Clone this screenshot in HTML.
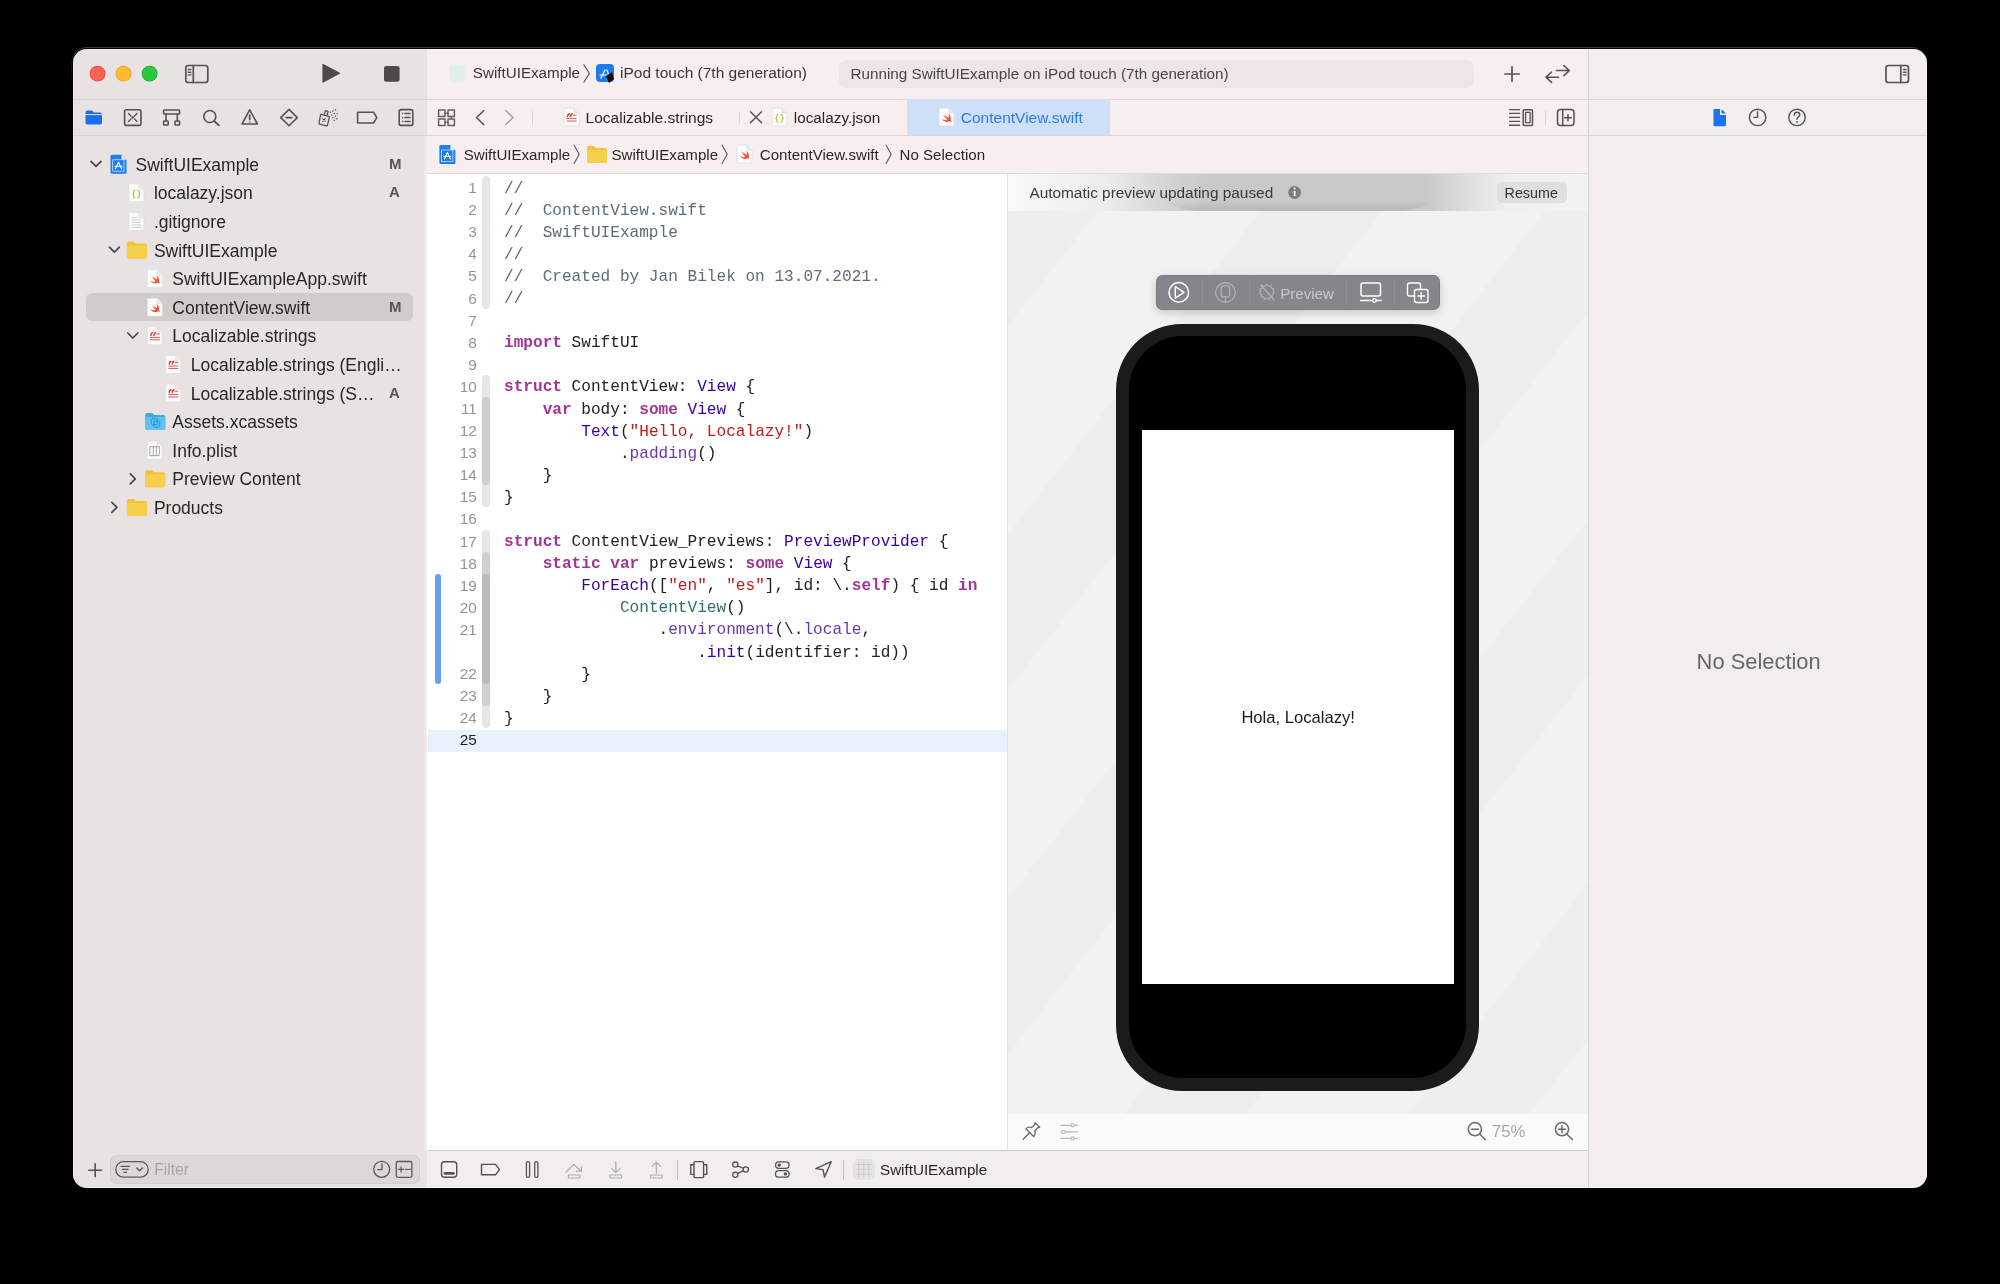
<!DOCTYPE html>
<html><head><meta charset="utf-8">
<style>
*{margin:0;padding:0;box-sizing:border-box}
html,body{width:2000px;height:1284px;background:#000;overflow:hidden;font-family:"Liberation Sans",sans-serif;color:#262222}
.a{position:absolute}
.t{position:absolute;white-space:pre}
#txt{position:absolute;left:0;top:0;width:2000px;height:1284px;will-change:transform}
svg{position:absolute;left:0;top:0}
</style></head>
<body>
<div class="a" style="left:70.6px;top:46.9px;width:1857.8px;height:60px;background:linear-gradient(180deg,#3c3c3c 0px,#1a1a1a 12px,#000 40px);border-radius:16.5px 16.5px 0 0;"></div>
<div class="a" style="left:71.5px;top:47.9px;width:1856px;height:60px;background:#000;border-radius:15.5px 15.5px 0 0;"></div>
<div class="a" style="left:72.6px;top:49px;width:354.4px;height:1138.8px;background:#e8e2e2;border-radius:14px 0 0 14px;box-shadow:inset 1px 1px 0 rgba(255,255,255,0.35),inset 0 -1px 0 rgba(255,255,255,0.35);"></div>
<div class="a" style="left:427px;top:49px;width:1161px;height:1138.8px;background:#f8eeef;box-shadow:inset 0 1px 0 rgba(255,255,255,0.45);"></div>
<div class="a" style="left:1588px;top:49px;width:338.7px;height:1138.8px;background:#f3eded;border-radius:0 14px 14px 0;box-shadow:inset -1px 1px 0 rgba(255,255,255,0.35),inset 0 -1px 0 rgba(255,255,255,0.35);"></div>
<div class="a" style="left:72.6px;top:99px;width:1854.1px;height:1px;background:#d9d3d3;"></div>
<div class="a" style="left:72.6px;top:135px;width:354.4px;height:1px;background:#d9d3d3;"></div>
<div class="a" style="left:427px;top:135px;width:1161px;height:1px;background:#dcd6d6;"></div>
<div class="a" style="left:1588px;top:135px;width:338.7px;height:1px;background:#d9d3d3;"></div>
<div class="a" style="left:427px;top:173px;width:1161px;height:1px;background:#e0dada;"></div>
<div class="a" style="left:1588px;top:49px;width:1px;height:1138.8px;background:#d6d0d0;"></div>
<div class="a" style="left:427px;top:174px;width:580px;height:976px;background:#ffffff;"></div>
<div class="a" style="left:423px;top:136px;width:4px;height:1015px;background:linear-gradient(90deg,rgba(255,255,255,0),rgba(255,255,255,0.45));"></div>
<div class="a" style="left:1007px;top:174px;width:1px;height:976px;background:#e2e2e2;"></div>
<div class="a" style="left:1008px;top:174px;width:580px;height:976px;background:#efefef;"></div>
<div class="a" style="left:427px;top:1151px;width:1161px;height:36.8px;background:#f3eeee;box-shadow:inset 0 -1px 0 rgba(255,255,255,0.35);"></div>
<div class="a" style="left:428px;top:1150px;width:1160px;height:1px;background:#d2cccc;"></div>
<div class="a" style="left:839px;top:60px;width:635px;height:28px;background:#eee5e6;border-radius:7px;"></div>
<div class="a" style="left:86px;top:293px;width:327px;height:28px;background:#d1cbcb;border-radius:6px;"></div>
<div class="a" style="left:532px;top:111px;width:1px;height:14px;background:#dcd6d6;"></div>
<div class="a" style="left:739px;top:112px;width:1px;height:12px;background:#dcd6d6;"></div>
<div class="a" style="left:907px;top:99px;width:203px;height:36px;background:#cde0f8;"></div>
<div class="a" style="left:1545px;top:110px;width:1px;height:15px;background:#dcd6d6;"></div>
<div class="a" style="left:428px;top:730px;width:579px;height:22px;background:#e8f1fd;"></div>
<div class="a" style="left:434.8px;top:574.37px;width:6px;height:109.45px;background:#65a2f7;border-radius:3px;"></div>
<div class="a" style="left:482px;top:176.25px;width:8px;height:132.45px;background:#e6e6e6;border-radius:4px 4px 4px 4px;"></div>
<div class="a" style="left:482px;top:375.06px;width:8px;height:132.45px;background:#e6e6e6;border-radius:4px 4px 4px 4px;"></div>
<div class="a" style="left:482px;top:397.15px;width:8px;height:88.27px;background:#cdcdcd;border-radius:4px 4px 4px 4px;"></div>
<div class="a" style="left:482px;top:529.69px;width:8px;height:198.72px;background:#e6e6e6;border-radius:4px 4px 4px 4px;"></div>
<div class="a" style="left:482px;top:551.78px;width:8px;height:154.54px;background:#d0d0d0;border-radius:4px 4px 4px 4px;"></div>
<div class="a" style="left:482px;top:573.87px;width:8px;height:110.36px;background:#bbbbbb;border-radius:4px 4px 4px 4px;"></div>
<div class="a" style="left:1008px;top:211px;width:580px;height:903px;background:repeating-linear-gradient(128deg,#eeeeee 0px,#eeeeee 70px,#f2f2f2 72px,#f2f2f2 198px,#eeeeee 200px,#eeeeee 224px);"></div>
<div class="a" style="left:1008px;top:174px;width:580px;height:37px;background:linear-gradient(90deg,#f9f9f9 0px,#ececec 100px,#d3d3d3 160px,#c9c9c9 205px,#cacaca 420px,#e2e2e2 468px,#f0f0f0 500px,#f3f3f3 580px);"></div>
<div class="a" style="left:1168px;top:201px;width:262px;height:10px;background:linear-gradient(180deg,rgba(0,0,0,0),rgba(0,0,0,0.09));border-radius:0 0 40px 40px / 0 0 10px 10px;"></div>
<div class="a" style="left:1496.5px;top:182px;width:70px;height:20.5px;background:#dfdfdf;border-radius:5px;"></div>
<div class="a" style="left:1156.3px;top:275px;width:284px;height:34.7px;background:#86858b;border-radius:7px;box-shadow:0 3px 10px rgba(0,0,0,0.18),inset 0 0 0 0.6px #77767b;"></div>
<div class="a" style="left:1116.4px;top:323.5px;width:362.5px;height:767.5px;background:#1b1b1b;border-radius:66px;"></div>
<div class="a" style="left:1129.2px;top:336.3px;width:337px;height:742px;background:#000;border-radius:54px;"></div>
<div class="a" style="left:1142px;top:430px;width:312px;height:554px;background:#fff;"></div>
<div class="a" style="left:1008px;top:1114px;width:580px;height:36px;background:#fbfbfb;"></div>
<div class="a" style="left:109.5px;top:1155.4px;width:310.2px;height:28.2px;background:#ddd7d7;border-radius:7px;box-shadow:inset 0 0 0 0.8px #d0caca;"></div>
<div class="a" style="left:677px;top:1159.5px;width:1.2px;height:20.5px;background:#c4bebe;"></div>
<div class="a" style="left:843.2px;top:1159.5px;width:1.2px;height:20.5px;background:#c4bebe;"></div>

<svg width="2000" height="1284" viewBox="0 0 2000 1284" fill="none" stroke-linecap="round" stroke-linejoin="round">
<circle cx="97.6" cy="73.7" r="7.9" fill="#e2463f"/><circle cx="97.6" cy="73.7" r="7.3" fill="#fe5f57"/><circle cx="123.6" cy="73.7" r="7.9" fill="#e1a325"/><circle cx="123.6" cy="73.7" r="7.3" fill="#febc2e"/><circle cx="149.6" cy="73.7" r="7.9" fill="#1aab29"/><circle cx="149.6" cy="73.7" r="7.3" fill="#28c840"/><rect x="185.8" y="65.5" width="22" height="17" rx="2.5" stroke="#575151" stroke-width="1.7"/><line x1="193.3" y1="65.5" x2="193.3" y2="82.5" stroke="#575151" stroke-width="1.7"/><path d="M188.3 69.5h2.6M188.3 72.2h2.6M188.3 74.9h2.6" stroke="#575151" stroke-width="1.4"/><path d="M323 64.6 L339.6 73.3 L323 82 Z" fill="#4f4a4a" stroke="#4f4a4a" stroke-width="1.2"/><rect x="384" y="66" width="15.6" height="15.8" rx="2.2" fill="#4f4a4a"/><rect x="449" y="65" width="16" height="17" rx="3" fill="#e3eeec" stroke="#ececec" stroke-width="0.8"/><path d="M583.8 64.6 L589.4 73.4 L583.8 82.2" stroke="#5c5656" stroke-width="1.1" stroke-linejoin="miter"/><rect x="596" y="64" width="18" height="18" rx="4" fill="#1d7bf2"/><path d="M601 78 L605 70 M607 70 L610 78 M600 75 H610" stroke="#fff" stroke-width="1.2"/><path d="M606 76 L612 72 L614 79 L609 83 Z" fill="#111"/><path d="M1512 66.8V81.2M1504.9 74H1519.2" stroke="#575151" stroke-width="1.7"/><path d="M1556.4 70.5H1569.3M1563.9 65.6L1569.3 70.5L1563.9 75.6M1546 77.2H1558.5M1551.5 72L1546 77.2L1551.5 82.4" stroke="#575151" stroke-width="1.6"/><rect x="1886" y="65.5" width="22.5" height="17" rx="2.5" stroke="#575151" stroke-width="1.7"/><line x1="1900.8" y1="65.5" x2="1900.8" y2="82.5" stroke="#575151" stroke-width="1.7"/><path d="M1903.5 69.5h2.6M1903.5 72.2h2.6M1903.5 74.9h2.6" stroke="#575151" stroke-width="1.4"/><path d="M85.5 112.5 Q85.5 110.5 87.5 110.5 H92 L94 112.5 H100 Q102 112.5 102 114.5 V122.5 Q102 124.5 100 124.5 H87.5 Q85.5 124.5 85.5 122.5 Z" fill="#1b6ef3"/><path d="M85.5 114.6 H102" stroke="#e8e2e2" stroke-width="1"/><rect x="124.6" y="109.8" width="16.4" height="15.6" rx="2" stroke="#575151" stroke-width="1.6"/><path d="M128.5 113.5L131 116M137 113.5L134.5 116M128.5 121.5L131 119M137 121.5L134.5 119" stroke="#575151" stroke-width="1.3"/><circle cx="132.8" cy="117.5" r="1.3" fill="#575151"/><rect x="163.6" y="110" width="16" height="4" rx="0.8" stroke="#575151" stroke-width="1.6"/><path d="M166 114V121M177.3 114V121" stroke="#575151" stroke-width="1.6"/><rect x="163.6" y="121" width="4.6" height="4" rx="0.8" stroke="#575151" stroke-width="1.6"/><rect x="175" y="121" width="4.6" height="4" rx="0.8" stroke="#575151" stroke-width="1.6"/><circle cx="209.8" cy="116.5" r="6" stroke="#575151" stroke-width="1.6"/><path d="M214.2 121L218.8 125.4" stroke="#575151" stroke-width="1.8"/><path d="M249.7 109.8 L257.4 124 H242 Z" stroke="#575151" stroke-width="1.6"/><path d="M249.7 115V119.5" stroke="#575151" stroke-width="1.7"/><circle cx="249.7" cy="122" r="0.8" fill="#575151"/><path d="M289 109.4 L297.3 117.6 L289 125.8 L280.7 117.6 Z" stroke="#575151" stroke-width="1.6"/><path d="M286 117.6H292" stroke="#575151" stroke-width="1.6"/><path d="M321.3 114.3 L328.9 116.3 Q329.5 116.5 329.4 117.2 L327.4 125.3 Q327.2 126 326.5 125.8 L319.6 124.1 Q318.9 123.9 319.1 123.2 L320.5 114.9 Q320.7 114.2 321.3 114.3 Z M324.6 113.9 L325.3 110.6 L328 111.3 L327.4 114.6" stroke="#575151" stroke-width="1.3"/><path d="M322.6 118.8L325.4 121.4M325.2 118.6L322.8 121.6" stroke="#575151" stroke-width="1.1"/><circle cx="335.5" cy="109.7" r="0.75" fill="#575151"/><circle cx="332.9" cy="110.9" r="0.75" fill="#575151"/><circle cx="330.5" cy="112.3" r="0.75" fill="#575151"/><circle cx="334.3" cy="113.5" r="0.75" fill="#575151"/><circle cx="337.1" cy="113.7" r="0.75" fill="#575151"/><circle cx="331.7" cy="114.9" r="0.75" fill="#575151"/><circle cx="335.5" cy="116.2" r="0.75" fill="#575151"/><circle cx="332.9" cy="117.4" r="0.75" fill="#575151"/><circle cx="336.9" cy="118.8" r="0.75" fill="#575151"/><circle cx="334.3" cy="120.2" r="0.75" fill="#575151"/><path d="M357.6 112.2 H373.5 L376.8 117.6 L373.5 123 H357.6 Z" stroke="#575151" stroke-width="1.6"/><rect x="399.2" y="109.6" width="13.6" height="15.8" rx="2" stroke="#575151" stroke-width="1.6"/><path d="M402.5 113.4h.3M402.5 117.6h.3M402.5 121.4h.3" stroke="#575151" stroke-width="1.4"/><path d="M405 113.4h5M405 117.6h5M405 121.4h5" stroke="#575151" stroke-width="1.5"/><path d="M91.0 161.39999999999998 L96.0 166.39999999999998 L101.0 161.39999999999998" stroke="#4d4747" stroke-width="1.7"/><path d="M110.5 156.2 Q110.5 154.7 112.0 154.7 H121.5 L126.5 159.7 V172.7 Q126.5 173.7 125.5 173.7 H112.0 Q110.5 173.7 110.5 172.2 Z" fill="#1f7ef0"/><path d="M121.5 154.7 L126.5 159.7 H122.5 Q121.5 159.7 121.5 158.7 Z" fill="#eaf3ff"/><rect x="113.0" y="159.7" width="11" height="11.5" fill="none" stroke="#cfe4ff" stroke-width="0.8"/><path d="M115.5 168.7 L118.5 162.2 L121.5 168.7 M115.0 166.2 H122.0" stroke="#fff" stroke-width="1.1"/><path d="M128.9 184.79999999999998 Q128.9 183.79999999999998 129.9 183.79999999999998 H138.9 L143.9 188.79999999999998 V200.79999999999998 Q143.9 201.79999999999998 142.9 201.79999999999998 H129.9 Q128.9 201.79999999999998 128.9 200.79999999999998 Z" fill="#fbfbfb" stroke="#dcdcdc" stroke-width="0.7"/><path d="M138.9 183.79999999999998 V188.79999999999998 H143.9" fill="#ececec" stroke="#d6d6d6" stroke-width="0.6"/><path d="M134.9 190.39999999999998 q-1.3 0 -1.3 1.3 v1.5 q0 1 -1 1 q1 0 1 1 v1.5 q0 1.3 1.3 1.3 M137.9 190.39999999999998 q1.3 0 1.3 1.3 v1.5 q0 1 1 1 q-1 0 -1 1 v1.5 q0 1.3 -1.3 1.3" stroke="#b5c33a" stroke-width="1.1"/><path d="M128.9 213.39999999999998 Q128.9 212.39999999999998 129.9 212.39999999999998 H138.9 L143.9 217.39999999999998 V229.39999999999998 Q143.9 230.39999999999998 142.9 230.39999999999998 H129.9 Q128.9 230.39999999999998 128.9 229.39999999999998 Z" fill="#fbfbfb" stroke="#dcdcdc" stroke-width="0.7"/><path d="M138.9 212.39999999999998 V217.39999999999998 H143.9" fill="#ececec" stroke="#d6d6d6" stroke-width="0.6"/><path d="M131.9 217.39999999999998h5M131.9 219.89999999999998h9M131.9 222.39999999999998h9M131.9 224.89999999999998h9M131.9 227.39999999999998h9" stroke="#c9c9c9" stroke-width="0.9"/><path d="M109.4 247.2 L114.4 252.2 L119.4 247.2" stroke="#4d4747" stroke-width="1.7"/><path d="M126.9 243.5 Q126.9 241.5 128.9 241.5 H133.9 L135.9 243.5 H144.9 Q146.9 243.5 146.9 245.5 V256.5 Q146.9 258.5 144.9 258.5 H128.9 Q126.9 258.5 126.9 256.5 Z" fill="#f2c33a"/><path d="M126.9 247.0 Q126.9 245.5 128.4 245.5 H145.4 Q146.9 245.5 146.9 247.0 V256.7 Q146.9 258.5 145.1 258.5 H128.70000000000002 Q126.9 258.5 126.9 256.7 Z" fill="#f6cf4b"/><path d="M147.3 270.59999999999997 Q147.3 269.59999999999997 148.3 269.59999999999997 H157.3 L162.3 274.59999999999997 V286.59999999999997 Q162.3 287.59999999999997 161.3 287.59999999999997 H148.3 Q147.3 287.59999999999997 147.3 286.59999999999997 Z" fill="#fbfbfb" stroke="#dcdcdc" stroke-width="0.7"/><path d="M157.3 269.59999999999997 V274.59999999999997 H162.3" fill="#ececec" stroke="#d6d6d6" stroke-width="0.6"/><path transform="translate(148.90 273.20) scale(0.53)" d="M13.543 3.41c4.114 2.47 6.545 7.162 5.549 11.131-.024.093-.05.181-.076.272l.002.001c2.062 2.538 1.5 5.258 1.236 4.745-1.072-2.086-3.066-1.568-4.088-1.043a6.803 6.803 0 0 1-.281.158l-.02.012-.002.002c-2.115 1.123-4.957 1.205-7.812-.022a12.568 12.568 0 0 1-5.640-4.838c.649.48 1.35.902 2.097 1.252 3.019 1.414 6.051 1.311 8.197-.002C9.651 12.73 7.101 9.67 5.146 7.191a10.628 10.628 0 0 1-1.005-1.384c2.34 2.142 6.038 4.83 7.365 5.576C8.69 8.408 6.208 4.743 6.324 4.86c4.436 4.47 8.528 6.996 8.528 6.996.154.085.27.154.36.213.085-.215.16-.437.224-.668.707-2.588-.09-5.548-1.893-7.992z" fill="#f05138"/><path d="M147.3 299.2 Q147.3 298.2 148.3 298.2 H157.3 L162.3 303.2 V315.2 Q162.3 316.2 161.3 316.2 H148.3 Q147.3 316.2 147.3 315.2 Z" fill="#fbfbfb" stroke="#dcdcdc" stroke-width="0.7"/><path d="M157.3 298.2 V303.2 H162.3" fill="#ececec" stroke="#d6d6d6" stroke-width="0.6"/><path transform="translate(148.90 301.80) scale(0.53)" d="M13.543 3.41c4.114 2.47 6.545 7.162 5.549 11.131-.024.093-.05.181-.076.272l.002.001c2.062 2.538 1.5 5.258 1.236 4.745-1.072-2.086-3.066-1.568-4.088-1.043a6.803 6.803 0 0 1-.281.158l-.02.012-.002.002c-2.115 1.123-4.957 1.205-7.812-.022a12.568 12.568 0 0 1-5.640-4.838c.649.48 1.35.902 2.097 1.252 3.019 1.414 6.051 1.311 8.197-.002C9.651 12.73 7.101 9.67 5.146 7.191a10.628 10.628 0 0 1-1.005-1.384c2.34 2.142 6.038 4.83 7.365 5.576C8.69 8.408 6.208 4.743 6.324 4.86c4.436 4.47 8.528 6.996 8.528 6.996.154.085.27.154.36.213.085-.215.16-.437.224-.668.707-2.588-.09-5.548-1.893-7.992z" fill="#f05138"/><path d="M127.80000000000001 333.0 L132.8 338.0 L137.8 333.0" stroke="#4d4747" stroke-width="1.7"/><path d="M147.3 327.8 Q147.3 326.8 148.3 326.8 H157.3 L162.3 331.8 V343.8 Q162.3 344.8 161.3 344.8 H148.3 Q147.3 344.8 147.3 343.8 Z" fill="#fbfbfb" stroke="#dcdcdc" stroke-width="0.7"/><path d="M157.3 326.8 V331.8 H162.3" fill="#ececec" stroke="#d6d6d6" stroke-width="0.6"/><path d="M150.9 335.40000000000003 q0-2.2 1.6-2.8 M153.9 335.40000000000003 q0-2.2 1.6-2.8" stroke="#d63a2f" stroke-width="1.5" stroke-linecap="round"/><path d="M156.5 334.0h3M150.3 337.40000000000003h9.2M150.3 339.8h9.2" stroke="#d9574d" stroke-width="1"/><path d="M165.7 356.40000000000003 Q165.7 355.40000000000003 166.7 355.40000000000003 H175.7 L180.7 360.40000000000003 V372.40000000000003 Q180.7 373.40000000000003 179.7 373.40000000000003 H166.7 Q165.7 373.40000000000003 165.7 372.40000000000003 Z" fill="#fbfbfb" stroke="#dcdcdc" stroke-width="0.7"/><path d="M175.7 355.40000000000003 V360.40000000000003 H180.7" fill="#ececec" stroke="#d6d6d6" stroke-width="0.6"/><path d="M169.29999999999998 364.00000000000006 q0-2.2 1.6-2.8 M172.29999999999998 364.00000000000006 q0-2.2 1.6-2.8" stroke="#d63a2f" stroke-width="1.5" stroke-linecap="round"/><path d="M174.89999999999998 362.6h3M168.7 366.00000000000006h9.2M168.7 368.40000000000003h9.2" stroke="#d9574d" stroke-width="1"/><path d="M165.7 385.0 Q165.7 384.0 166.7 384.0 H175.7 L180.7 389.0 V401.0 Q180.7 402.0 179.7 402.0 H166.7 Q165.7 402.0 165.7 401.0 Z" fill="#fbfbfb" stroke="#dcdcdc" stroke-width="0.7"/><path d="M175.7 384.0 V389.0 H180.7" fill="#ececec" stroke="#d6d6d6" stroke-width="0.6"/><path d="M169.29999999999998 392.6 q0-2.2 1.6-2.8 M172.29999999999998 392.6 q0-2.2 1.6-2.8" stroke="#d63a2f" stroke-width="1.5" stroke-linecap="round"/><path d="M174.89999999999998 391.2h3M168.7 394.6h9.2M168.7 397.0h9.2" stroke="#d9574d" stroke-width="1"/><path d="M145.3 415.1 Q145.3 413.1 147.3 413.1 H152.3 L154.3 415.1 H163.3 Q165.3 415.1 165.3 417.1 V428.1 Q165.3 430.1 163.3 430.1 H147.3 Q145.3 430.1 145.3 428.1 Z" fill="#3ea8e6"/><path d="M145.3 418.6 Q145.3 417.1 146.8 417.1 H163.8 Q165.3 417.1 165.3 418.6 V428.3 Q165.3 430.1 163.5 430.1 H147.10000000000002 Q145.3 430.1 145.3 428.3 Z" fill="#5ec3f2"/><rect x="151.3" y="418.6" width="6" height="6" stroke="#2d8fd0" stroke-width="0.9" rx="1"/><rect x="153.8" y="421.1" width="6" height="6" stroke="#2d8fd0" stroke-width="0.9" rx="1"/><path d="M147.3 442.2 Q147.3 441.2 148.3 441.2 H157.3 L162.3 446.2 V458.2 Q162.3 459.2 161.3 459.2 H148.3 Q147.3 459.2 147.3 458.2 Z" fill="#fbfbfb" stroke="#dcdcdc" stroke-width="0.7"/><path d="M157.3 441.2 V446.2 H162.3" fill="#ececec" stroke="#d6d6d6" stroke-width="0.6"/><rect x="150.3" y="446.7" width="9" height="9" fill="none" stroke="#9a9a9a" stroke-width="0.9"/><path d="M153.3 446.7v9M156.3 446.7v9" stroke="#9a9a9a" stroke-width="0.9"/><path d="M130.3 473.8 L135.3 478.8 L130.3 483.8" stroke="#4d4747" stroke-width="1.7"/><path d="M145.3 472.3 Q145.3 470.3 147.3 470.3 H152.3 L154.3 472.3 H163.3 Q165.3 472.3 165.3 474.3 V485.3 Q165.3 487.3 163.3 487.3 H147.3 Q145.3 487.3 145.3 485.3 Z" fill="#f2c33a"/><path d="M145.3 475.8 Q145.3 474.3 146.8 474.3 H163.8 Q165.3 474.3 165.3 475.8 V485.5 Q165.3 487.3 163.5 487.3 H147.10000000000002 Q145.3 487.3 145.3 485.5 Z" fill="#f6cf4b"/><path d="M111.9 502.40000000000003 L116.9 507.40000000000003 L111.9 512.4000000000001" stroke="#4d4747" stroke-width="1.7"/><path d="M126.9 500.90000000000003 Q126.9 498.90000000000003 128.9 498.90000000000003 H133.9 L135.9 500.90000000000003 H144.9 Q146.9 500.90000000000003 146.9 502.90000000000003 V513.9000000000001 Q146.9 515.9000000000001 144.9 515.9000000000001 H128.9 Q126.9 515.9000000000001 126.9 513.9000000000001 Z" fill="#f2c33a"/><path d="M126.9 504.40000000000003 Q126.9 502.90000000000003 128.4 502.90000000000003 H145.4 Q146.9 502.90000000000003 146.9 504.40000000000003 V514.1 Q146.9 515.9000000000001 145.1 515.9000000000001 H128.70000000000002 Q126.9 515.9000000000001 126.9 514.1 Z" fill="#f6cf4b"/><path d="M438.6 110h6.4v6.4h-6.4zM438.6 119h6.4v6.4h-6.4zM448 110h6.4v6.4h-6.4zM448 119h6.4v6.4h-6.4z" stroke="#656060" stroke-width="1.5"/><path d="M445 113.2h3.5M451.2 116.4v2.6M448 122.2h-3" stroke="#575151" stroke-width="1"/><path d="M483.8 110.6 L476.5 117.6 L483.8 124.6" stroke="#625c5c" stroke-width="1.5"/><path d="M505.9 110.6 L513 117.6 L505.9 124.6" stroke="#a29c9c" stroke-width="1.4"/><path d="M564 109 Q564 108 565 108 H574 L579 113 V125 Q579 126 578 126 H565 Q564 126 564 125 Z" fill="#fbfbfb" stroke="#dcdcdc" stroke-width="0.7"/><path d="M574 108 V113 H579" fill="#ececec" stroke="#d6d6d6" stroke-width="0.6"/><path d="M567.6 116.6 q0-2.2 1.6-2.8 M570.6 116.6 q0-2.2 1.6-2.8" stroke="#d63a2f" stroke-width="1.5" stroke-linecap="round"/><path d="M573.2 115.2h3M567 118.6h9.2M567 121h9.2" stroke="#d9574d" stroke-width="1"/><path d="M750.5 111.8L761.5 122.8M761.5 111.8L750.5 122.8" stroke="#5a5454" stroke-width="1.5"/><path d="M772 109 Q772 108 773 108 H782 L787 113 V125 Q787 126 786 126 H773 Q772 126 772 125 Z" fill="#fbfbfb" stroke="#dcdcdc" stroke-width="0.7"/><path d="M782 108 V113 H787" fill="#ececec" stroke="#d6d6d6" stroke-width="0.6"/><path d="M778 114.6 q-1.3 0 -1.3 1.3 v1.5 q0 1 -1 1 q1 0 1 1 v1.5 q0 1.3 1.3 1.3 M781 114.6 q1.3 0 1.3 1.3 v1.5 q0 1 1 1 q-1 0 -1 1 v1.5 q0 1.3 -1.3 1.3" stroke="#b5c33a" stroke-width="1.1"/><path d="M939 109 Q939 108 940 108 H949 L954 113 V125 Q954 126 953 126 H940 Q939 126 939 125 Z" fill="#fbfbfb" stroke="#dcdcdc" stroke-width="0.7"/><path d="M949 108 V113 H954" fill="#ececec" stroke="#d6d6d6" stroke-width="0.6"/><path transform="translate(940.60 111.60) scale(0.53)" d="M13.543 3.41c4.114 2.47 6.545 7.162 5.549 11.131-.024.093-.05.181-.076.272l.002.001c2.062 2.538 1.5 5.258 1.236 4.745-1.072-2.086-3.066-1.568-4.088-1.043a6.803 6.803 0 0 1-.281.158l-.02.012-.002.002c-2.115 1.123-4.957 1.205-7.812-.022a12.568 12.568 0 0 1-5.640-4.838c.649.48 1.35.902 2.097 1.252 3.019 1.414 6.051 1.311 8.197-.002C9.651 12.73 7.101 9.67 5.146 7.191a10.628 10.628 0 0 1-1.005-1.384c2.34 2.142 6.038 4.83 7.365 5.576C8.69 8.408 6.208 4.743 6.324 4.86c4.436 4.47 8.528 6.996 8.528 6.996.154.085.27.154.36.213.085-.215.16-.437.224-.668.707-2.588-.09-5.548-1.893-7.992z" fill="#f05138"/><path d="M1509.6 109.6h10M1509.6 113.4h10M1509.6 117.4h10M1509.6 121.4h10M1509.6 125.3h10" stroke="#575151" stroke-width="1.4"/><rect x="1523.2" y="109.8" width="9.3" height="15.6" rx="1" stroke="#575151" stroke-width="1.5"/><rect x="1525.6" y="112.4" width="4.5" height="10.2" stroke="#575151" stroke-width="1.3"/><rect x="1557.5" y="109.6" width="16.5" height="15.8" rx="3" stroke="#575151" stroke-width="1.5"/><path d="M1562.7 109.6v15.8M1568 114.5v6.4M1564.8 117.7h6.4" stroke="#575151" stroke-width="1.5"/><path d="M439.4 146.5 Q439.4 145 440.9 145 H450.4 L455.4 150 V163 Q455.4 164 454.4 164 H440.9 Q439.4 164 439.4 162.5 Z" fill="#1f7ef0"/><path d="M450.4 145 L455.4 150 H451.4 Q450.4 150 450.4 149 Z" fill="#eaf3ff"/><rect x="441.9" y="150" width="11" height="11.5" fill="none" stroke="#cfe4ff" stroke-width="0.8"/><path d="M444.4 159 L447.4 152.5 L450.4 159 M443.9 156.5 H450.9" stroke="#fff" stroke-width="1.1"/><path d="M574 145 L579.2 154.3 L574 163.6" stroke="#5c5656" stroke-width="1.1" stroke-linejoin="miter"/><path d="M587 148 Q587 146 589 146 H594 L596 148 H605 Q607 148 607 150 V161 Q607 163 605 163 H589 Q587 163 587 161 Z" fill="#f2c33a"/><path d="M587 151.5 Q587 150 588.5 150 H605.5 Q607 150 607 151.5 V161.2 Q607 163 605.2 163 H588.8 Q587 163 587 161.2 Z" fill="#f6cf4b"/><path d="M722 145 L727.2 154.3 L722 163.6" stroke="#5c5656" stroke-width="1.1" stroke-linejoin="miter"/><path d="M737 146 Q737 145 738 145 H747 L752 150 V162 Q752 163 751 163 H738 Q737 163 737 162 Z" fill="#fbfbfb" stroke="#dcdcdc" stroke-width="0.7"/><path d="M747 145 V150 H752" fill="#ececec" stroke="#d6d6d6" stroke-width="0.6"/><path transform="translate(738.60 148.60) scale(0.53)" d="M13.543 3.41c4.114 2.47 6.545 7.162 5.549 11.131-.024.093-.05.181-.076.272l.002.001c2.062 2.538 1.5 5.258 1.236 4.745-1.072-2.086-3.066-1.568-4.088-1.043a6.803 6.803 0 0 1-.281.158l-.02.012-.002.002c-2.115 1.123-4.957 1.205-7.812-.022a12.568 12.568 0 0 1-5.640-4.838c.649.48 1.35.902 2.097 1.252 3.019 1.414 6.051 1.311 8.197-.002C9.651 12.73 7.101 9.67 5.146 7.191a10.628 10.628 0 0 1-1.005-1.384c2.34 2.142 6.038 4.83 7.365 5.576C8.69 8.408 6.208 4.743 6.324 4.86c4.436 4.47 8.528 6.996 8.528 6.996.154.085.27.154.36.213.085-.215.16-.437.224-.668.707-2.588-.09-5.548-1.893-7.992z" fill="#f05138"/><path d="M886 145 L891.2 154.3 L886 163.6" stroke="#5c5656" stroke-width="1.1" stroke-linejoin="miter"/><path d="M1713.5 110 Q1713.5 109 1714.5 109 H1720 V115 H1726 V125 Q1726 126.2 1724.8 126.2 H1714.7 Q1713.5 126.2 1713.5 125 Z" fill="#1a73f0"/><path d="M1721.5 109 L1726 113.6 H1721.5 Z" fill="#1a73f0"/><circle cx="1757.6" cy="117.4" r="8.2" stroke="#575151" stroke-width="1.4"/><path d="M1757.6 111.8V117.4H1753.8" stroke="#575151" stroke-width="1.4"/><circle cx="1797" cy="117.4" r="8.2" stroke="#575151" stroke-width="1.4"/><path d="M1794.3 115.2 Q1794.3 112.2 1797 112.2 Q1799.8 112.2 1799.8 114.8 Q1799.8 116.4 1797.8 117.3 Q1797 117.8 1797 119.3" stroke="#575151" stroke-width="1.4"/><circle cx="1797" cy="122" r="0.9" fill="#575151"/><circle cx="1294.6" cy="192.5" r="6.4" fill="#7c7c7c"/><path d="M1294.6 191V196" stroke="#fff" stroke-width="1.8" stroke-linecap="butt"/><circle cx="1294.6" cy="188.6" r="1" fill="#fff"/><circle cx="1178.8" cy="292.4" r="9.8" stroke="#fff" stroke-width="1.5"/><path d="M1175.3 286.6 L1184 292.4 L1175.3 298.2 Z" stroke="#fff" stroke-width="1.4"/><path d="M1202.5 280v25M1249.7 280v25M1346.5 280v25M1394.5 280v25" stroke="#8f8e94" stroke-width="1"/><circle cx="1225.4" cy="292.4" r="9.8" stroke="#b3b2b7" stroke-width="1.2"/><rect x="1221.2" y="285.8" width="8.4" height="11" rx="2" stroke="#b3b2b7" stroke-width="1.2"/><path d="M1225.4 296.8v5.5" stroke="#b3b2b7" stroke-width="1.2"/><path d="M1267.2 284.5 l1.6 1.8 2.3-.5.5 2.3 2.2.9-.9 2.2 1.2 2-1.9 1.3.1 2.4-2.4.2-1 2.2-2.1-1.1-2.1 1.1-1-2.2-2.4-.2.1-2.4-1.9-1.3 1.2-2-.9-2.2 2.2-.9.5-2.3 2.3.5z" stroke="#b3b2b7" stroke-width="1.1"/><path d="M1261 285 L1274 300" stroke="#b3b2b7" stroke-width="1.2"/><rect x="1361" y="283" width="19.5" height="13" rx="2" stroke="#fff" stroke-width="1.5"/><path d="M1360.5 300.5H1381.5" stroke="#fff" stroke-width="1.3"/><circle cx="1374.5" cy="300.5" r="1.8" fill="#86858b" stroke="#fff" stroke-width="1.3"/><rect x="1407.5" y="283" width="13" height="13" rx="2" stroke="#fff" stroke-width="1.4"/><rect x="1414.5" y="289.5" width="13.5" height="13" rx="2" fill="#86858b" stroke="#fff" stroke-width="1.4"/><path d="M1421.2 292.6v6.8M1417.8 296h6.8" stroke="#fff" stroke-width="1.4"/><g transform="translate(1030.6 1131.8) rotate(45)"><path d="M-3.2 -9.6 H3.2 L2.2 -8 V-3.8 Q5.4 -2.2 5.4 1.2 H-5.4 Q-5.4 -2.2 -2.2 -3.8 V-8 Z" stroke="#6a6a6a" stroke-width="1.3"/><path d="M0 1.4 V10.5" stroke="#6a6a6a" stroke-width="1.4"/></g><path d="M1061 1125.4H1077.4M1061 1131.9H1077.4M1061 1138.4H1077.4" stroke="#b5b5b5" stroke-width="1.1"/><circle cx="1072.6" cy="1125.4" r="1.6" fill="#fbfbfb" stroke="#b5b5b5" stroke-width="1.1"/><circle cx="1063.6" cy="1131.9" r="1.6" fill="#fbfbfb" stroke="#b5b5b5" stroke-width="1.1"/><circle cx="1072.6" cy="1138.4" r="1.6" fill="#fbfbfb" stroke="#b5b5b5" stroke-width="1.1"/><circle cx="1474.9" cy="1129.2" r="6.6" stroke="#6a6a6a" stroke-width="1.5"/><path d="M1479.6 1134L1485.3 1139.5M1471.4 1129.2H1478.4" stroke="#6a6a6a" stroke-width="1.5"/><circle cx="1562" cy="1129.2" r="6.6" stroke="#6a6a6a" stroke-width="1.5"/><path d="M1566.7 1134L1572.4 1139.5M1558.5 1129.2H1565.5M1562 1125.7V1132.7" stroke="#6a6a6a" stroke-width="1.5"/><path d="M95.2 1163.8V1176.6M88.8 1170.2H101.6" stroke="#575151" stroke-width="1.6"/><rect x="115.8" y="1161.6" width="32.4" height="15.6" rx="7.8" stroke="#5e5858" stroke-width="1.3"/><path d="M121 1166.4h8.4M122.4 1169.4h5.6M124 1172.4h2.4" stroke="#5e5858" stroke-width="1.3"/><path d="M136.8 1168l2.8 2.8 2.8-2.8" stroke="#5e5858" stroke-width="1.4"/><circle cx="381.7" cy="1169.3" r="8" stroke="#5e5858" stroke-width="1.3"/><path d="M382 1163.8V1169.6H377.6" stroke="#5e5858" stroke-width="1.3"/><rect x="396.3" y="1161.5" width="15.6" height="15.8" rx="1.5" stroke="#5e5858" stroke-width="1.3"/><path d="M398.6 1169.4h5M401.1 1166.9v5M405.6 1169.4h1.8M408.6 1169.4h1.8" stroke="#5e5858" stroke-width="1.2"/><rect x="441.5" y="1161.8" width="15.2" height="15.4" rx="3" stroke="#575151" stroke-width="1.4"/><rect x="443.6" y="1172" width="11" height="2.8" rx="1.2" fill="#575151"/><path d="M481.5 1164.4 H495.6 L499.4 1169.6 L495.6 1174.8 H481.5 Z" stroke="#575151" stroke-width="1.4"/><rect x="526.4" y="1161.6" width="3.2" height="15.8" rx="1.6" stroke="#575151" stroke-width="1.3"/><rect x="534.7" y="1161.6" width="3.2" height="15.8" rx="1.6" stroke="#575151" stroke-width="1.3"/><path d="M566 1172 L573.8 1164.4 L580 1170.2 M576.6 1171.2 L581.4 1171.2 L581.4 1166.6" stroke="#b3adad" stroke-width="1.3"/><rect x="568.4" y="1175" width="11.6" height="3" stroke="#b3adad" stroke-width="1.1"/><path d="M615.8 1161.6V1172.4M611.6 1168.4L615.8 1172.6L620 1168.4" stroke="#b3adad" stroke-width="1.3"/><rect x="610" y="1175" width="11.6" height="3" stroke="#b3adad" stroke-width="1.1"/><path d="M656.4 1173V1162.2M652.2 1166.4L656.4 1162.2L660.6 1166.4" stroke="#b3adad" stroke-width="1.3"/><rect x="650.6" y="1175" width="11.6" height="3" stroke="#b3adad" stroke-width="1.1"/><rect x="694" y="1161.6" width="9.6" height="16" rx="1.2" stroke="#575151" stroke-width="1.4"/><path d="M694 1164.8H690.8V1174.4H694M703.6 1164.8H706.8V1174.4H703.6" stroke="#575151" stroke-width="1.4"/><circle cx="735.3" cy="1164.6" r="2.6" stroke="#575151" stroke-width="1.3"/><circle cx="745.8" cy="1169.5" r="2.6" stroke="#575151" stroke-width="1.3"/><circle cx="735.3" cy="1174.8" r="2.6" stroke="#575151" stroke-width="1.3"/><path d="M737.6 1165.8L743.4 1168.4M737.6 1173.6L743.4 1170.7" stroke="#575151" stroke-width="1.3"/><rect x="775.5" y="1161.8" width="13.6" height="6.6" rx="3.3" stroke="#575151" stroke-width="1.3"/><circle cx="779.2" cy="1165.1" r="1.7" fill="#575151"/><rect x="775.5" y="1170.6" width="13.6" height="6.6" rx="3.3" stroke="#575151" stroke-width="1.3"/><circle cx="785.4" cy="1173.9" r="1.7" fill="#575151"/><path d="M831.2 1161.6 L815.8 1168.6 L823 1169.6 L824.6 1177 Z" stroke="#575151" stroke-width="1.4"/><rect x="853.6" y="1159.6" width="20.4" height="19.6" rx="4.5" fill="#e6e6e6" stroke="#d8d8d8" stroke-width="0.6"/><path d="M856 1164.5h15.6M856 1169.4h15.6M856 1174.3h15.6M858.8 1162v15M863.8 1162v15M868.8 1162v15" stroke="#bcbcbc" stroke-width="0.6"/>
</svg>
<div id="txt"><div class="t" style="left:472.80px;top:65.43px;font-size:15.2px;line-height:15.2px;color:#3b3636;">SwiftUIExample</div>
<div class="t" style="left:620.00px;top:65.18px;font-size:15.5px;line-height:15.5px;color:#3b3636;">iPod touch (7th generation)</div>
<div class="t" style="left:850.50px;top:66.19px;font-size:15.25px;line-height:15.25px;color:#4a4545;">Running SwiftUIExample on iPod touch (7th generation)</div>
<div class="t" style="left:135.50px;top:156.89px;font-size:17.5px;line-height:17.5px;color:#2a2626;">SwiftUIExample</div>
<div class="t" style="left:389.00px;top:155.80px;font-size:15px;line-height:15px;color:#5a5555;font-weight:bold;">M</div>
<div class="t" style="left:153.90px;top:185.49px;font-size:17.5px;line-height:17.5px;color:#2a2626;">localazy.json</div>
<div class="t" style="left:389.00px;top:184.40px;font-size:15px;line-height:15px;color:#5a5555;font-weight:bold;">A</div>
<div class="t" style="left:153.90px;top:214.09px;font-size:17.5px;line-height:17.5px;color:#2a2626;">.gitignore</div>
<div class="t" style="left:153.90px;top:242.69px;font-size:17.5px;line-height:17.5px;color:#2a2626;">SwiftUIExample</div>
<div class="t" style="left:172.30px;top:271.29px;font-size:17.5px;line-height:17.5px;color:#2a2626;">SwiftUIExampleApp.swift</div>
<div class="t" style="left:172.30px;top:299.89px;font-size:17.5px;line-height:17.5px;color:#2a2626;">ContentView.swift</div>
<div class="t" style="left:389.00px;top:298.80px;font-size:15px;line-height:15px;color:#5a5555;font-weight:bold;">M</div>
<div class="t" style="left:172.30px;top:328.49px;font-size:17.5px;line-height:17.5px;color:#2a2626;">Localizable.strings</div>
<div class="t" style="left:190.70px;top:357.09px;font-size:17.5px;line-height:17.5px;color:#2a2626;">Localizable.strings (Engli…</div>
<div class="t" style="left:190.70px;top:385.69px;font-size:17.5px;line-height:17.5px;color:#2a2626;">Localizable.strings (S…</div>
<div class="t" style="left:389.00px;top:384.60px;font-size:15px;line-height:15px;color:#5a5555;font-weight:bold;">A</div>
<div class="t" style="left:172.30px;top:414.29px;font-size:17.5px;line-height:17.5px;color:#2a2626;">Assets.xcassets</div>
<div class="t" style="left:172.30px;top:442.89px;font-size:17.5px;line-height:17.5px;color:#2a2626;">Info.plist</div>
<div class="t" style="left:172.30px;top:471.49px;font-size:17.5px;line-height:17.5px;color:#2a2626;">Preview Content</div>
<div class="t" style="left:153.90px;top:500.09px;font-size:17.5px;line-height:17.5px;color:#2a2626;">Products</div>
<div class="t" style="left:585.60px;top:110.08px;font-size:15.5px;line-height:15.5px;color:#2a2626;">Localizable.strings</div>
<div class="t" style="left:793.80px;top:110.25px;font-size:15.3px;line-height:15.3px;color:#2a2626;">localazy.json</div>
<div class="t" style="left:960.80px;top:110.08px;font-size:15.5px;line-height:15.5px;color:#2f7ae8;">ContentView.swift</div>
<div class="t" style="left:463.70px;top:146.82px;font-size:15.1px;line-height:15.1px;color:#2a2626;">SwiftUIExample</div>
<div class="t" style="left:611.50px;top:146.82px;font-size:15.1px;line-height:15.1px;color:#2a2626;">SwiftUIExample</div>
<div class="t" style="left:759.80px;top:146.82px;font-size:15.1px;line-height:15.1px;color:#2a2626;">ContentView.swift</div>
<div class="t" style="left:899.50px;top:146.82px;font-size:15.1px;line-height:15.1px;color:#2a2626;">No Selection</div>
<div class="t" style="left:440.00px;top:180.10px;font-size:15.3px;line-height:15.3px;color:#959595;width:36.8px;text-align:right;">1</div>
<div class="t" style="left:504.00px;top:180.62px;font-size:16.1px;line-height:16.1px;color:#222222;font-family:'Liberation Mono',monospace;"><span style="color:#5d6c79">//</span></div>
<div class="t" style="left:440.00px;top:202.19px;font-size:15.3px;line-height:15.3px;color:#959595;width:36.8px;text-align:right;">2</div>
<div class="t" style="left:504.00px;top:202.71px;font-size:16.1px;line-height:16.1px;color:#222222;font-family:'Liberation Mono',monospace;"><span style="color:#5d6c79">//  ContentView.swift</span></div>
<div class="t" style="left:440.00px;top:224.28px;font-size:15.3px;line-height:15.3px;color:#959595;width:36.8px;text-align:right;">3</div>
<div class="t" style="left:504.00px;top:224.80px;font-size:16.1px;line-height:16.1px;color:#222222;font-family:'Liberation Mono',monospace;"><span style="color:#5d6c79">//  SwiftUIExample</span></div>
<div class="t" style="left:440.00px;top:246.37px;font-size:15.3px;line-height:15.3px;color:#959595;width:36.8px;text-align:right;">4</div>
<div class="t" style="left:504.00px;top:246.89px;font-size:16.1px;line-height:16.1px;color:#222222;font-family:'Liberation Mono',monospace;"><span style="color:#5d6c79">//</span></div>
<div class="t" style="left:440.00px;top:268.46px;font-size:15.3px;line-height:15.3px;color:#959595;width:36.8px;text-align:right;">5</div>
<div class="t" style="left:504.00px;top:268.98px;font-size:16.1px;line-height:16.1px;color:#222222;font-family:'Liberation Mono',monospace;"><span style="color:#5d6c79">//  Created by Jan Bilek on 13.07.2021.</span></div>
<div class="t" style="left:440.00px;top:290.55px;font-size:15.3px;line-height:15.3px;color:#959595;width:36.8px;text-align:right;">6</div>
<div class="t" style="left:504.00px;top:291.07px;font-size:16.1px;line-height:16.1px;color:#222222;font-family:'Liberation Mono',monospace;"><span style="color:#5d6c79">//</span></div>
<div class="t" style="left:440.00px;top:312.64px;font-size:15.3px;line-height:15.3px;color:#959595;width:36.8px;text-align:right;">7</div>
<div class="t" style="left:440.00px;top:334.73px;font-size:15.3px;line-height:15.3px;color:#959595;width:36.8px;text-align:right;">8</div>
<div class="t" style="left:504.00px;top:335.25px;font-size:16.1px;line-height:16.1px;color:#222222;font-family:'Liberation Mono',monospace;"><b style="color:#a03597">import</b> SwiftUI</div>
<div class="t" style="left:440.00px;top:356.82px;font-size:15.3px;line-height:15.3px;color:#959595;width:36.8px;text-align:right;">9</div>
<div class="t" style="left:440.00px;top:378.91px;font-size:15.3px;line-height:15.3px;color:#959595;width:36.8px;text-align:right;">10</div>
<div class="t" style="left:504.00px;top:379.43px;font-size:16.1px;line-height:16.1px;color:#222222;font-family:'Liberation Mono',monospace;"><b style="color:#a03597">struct</b> ContentView: <span style="color:#3900a0">View</span> {</div>
<div class="t" style="left:440.00px;top:401.00px;font-size:15.3px;line-height:15.3px;color:#959595;width:36.8px;text-align:right;">11</div>
<div class="t" style="left:504.00px;top:401.52px;font-size:16.1px;line-height:16.1px;color:#222222;font-family:'Liberation Mono',monospace;">    <b style="color:#a03597">var</b> body: <b style="color:#a03597">some</b> <span style="color:#3900a0">View</span> {</div>
<div class="t" style="left:440.00px;top:423.09px;font-size:15.3px;line-height:15.3px;color:#959595;width:36.8px;text-align:right;">12</div>
<div class="t" style="left:504.00px;top:423.61px;font-size:16.1px;line-height:16.1px;color:#222222;font-family:'Liberation Mono',monospace;">        <span style="color:#3900a0">Text</span>(<span style="color:#c41a16">"Hello, Localazy!"</span>)</div>
<div class="t" style="left:440.00px;top:445.18px;font-size:15.3px;line-height:15.3px;color:#959595;width:36.8px;text-align:right;">13</div>
<div class="t" style="left:504.00px;top:445.70px;font-size:16.1px;line-height:16.1px;color:#222222;font-family:'Liberation Mono',monospace;">            .<span style="color:#6c36a9">padding</span>()</div>
<div class="t" style="left:440.00px;top:467.27px;font-size:15.3px;line-height:15.3px;color:#959595;width:36.8px;text-align:right;">14</div>
<div class="t" style="left:504.00px;top:467.79px;font-size:16.1px;line-height:16.1px;color:#222222;font-family:'Liberation Mono',monospace;">    }</div>
<div class="t" style="left:440.00px;top:489.36px;font-size:15.3px;line-height:15.3px;color:#959595;width:36.8px;text-align:right;">15</div>
<div class="t" style="left:504.00px;top:489.88px;font-size:16.1px;line-height:16.1px;color:#222222;font-family:'Liberation Mono',monospace;">}</div>
<div class="t" style="left:440.00px;top:511.45px;font-size:15.3px;line-height:15.3px;color:#959595;width:36.8px;text-align:right;">16</div>
<div class="t" style="left:440.00px;top:533.54px;font-size:15.3px;line-height:15.3px;color:#959595;width:36.8px;text-align:right;">17</div>
<div class="t" style="left:504.00px;top:534.06px;font-size:16.1px;line-height:16.1px;color:#222222;font-family:'Liberation Mono',monospace;"><b style="color:#a03597">struct</b> ContentView_Previews: <span style="color:#3900a0">PreviewProvider</span> {</div>
<div class="t" style="left:440.00px;top:555.63px;font-size:15.3px;line-height:15.3px;color:#959595;width:36.8px;text-align:right;">18</div>
<div class="t" style="left:504.00px;top:556.15px;font-size:16.1px;line-height:16.1px;color:#222222;font-family:'Liberation Mono',monospace;">    <b style="color:#a03597">static</b> <b style="color:#a03597">var</b> previews: <b style="color:#a03597">some</b> <span style="color:#3900a0">View</span> {</div>
<div class="t" style="left:440.00px;top:577.72px;font-size:15.3px;line-height:15.3px;color:#959595;width:36.8px;text-align:right;">19</div>
<div class="t" style="left:504.00px;top:578.24px;font-size:16.1px;line-height:16.1px;color:#222222;font-family:'Liberation Mono',monospace;">        <span style="color:#3900a0">ForEach</span>([<span style="color:#c41a16">"en"</span>, <span style="color:#c41a16">"es"</span>], id: \.<b style="color:#a03597">self</b>) { id <b style="color:#a03597">in</b></div>
<div class="t" style="left:440.00px;top:599.81px;font-size:15.3px;line-height:15.3px;color:#959595;width:36.8px;text-align:right;">20</div>
<div class="t" style="left:504.00px;top:600.33px;font-size:16.1px;line-height:16.1px;color:#222222;font-family:'Liberation Mono',monospace;">            <span style="color:#326d74">ContentView</span>()</div>
<div class="t" style="left:440.00px;top:621.90px;font-size:15.3px;line-height:15.3px;color:#959595;width:36.8px;text-align:right;">21</div>
<div class="t" style="left:504.00px;top:622.42px;font-size:16.1px;line-height:16.1px;color:#222222;font-family:'Liberation Mono',monospace;">                .<span style="color:#6c36a9">environment</span>(\.<span style="color:#6c36a9">locale</span>,</div>
<div class="t" style="left:504.00px;top:644.51px;font-size:16.1px;line-height:16.1px;color:#222222;font-family:'Liberation Mono',monospace;">                    .<span style="color:#3900a0">init</span>(identifier: id))</div>
<div class="t" style="left:440.00px;top:666.08px;font-size:15.3px;line-height:15.3px;color:#959595;width:36.8px;text-align:right;">22</div>
<div class="t" style="left:504.00px;top:666.60px;font-size:16.1px;line-height:16.1px;color:#222222;font-family:'Liberation Mono',monospace;">        }</div>
<div class="t" style="left:440.00px;top:688.17px;font-size:15.3px;line-height:15.3px;color:#959595;width:36.8px;text-align:right;">23</div>
<div class="t" style="left:504.00px;top:688.69px;font-size:16.1px;line-height:16.1px;color:#222222;font-family:'Liberation Mono',monospace;">    }</div>
<div class="t" style="left:440.00px;top:710.26px;font-size:15.3px;line-height:15.3px;color:#959595;width:36.8px;text-align:right;">24</div>
<div class="t" style="left:504.00px;top:710.78px;font-size:16.1px;line-height:16.1px;color:#222222;font-family:'Liberation Mono',monospace;">}</div>
<div class="t" style="left:440.00px;top:732.35px;font-size:15.3px;line-height:15.3px;color:#1f1f1f;width:36.8px;text-align:right;">25</div>
<div class="t" style="left:1029.40px;top:184.56px;font-size:15.4px;line-height:15.4px;color:#3a3a3a;">Automatic preview updating paused</div>
<div class="t" style="left:1504.60px;top:185.50px;font-size:14.3px;line-height:14.3px;color:#333;">Resume</div>
<div class="t" style="left:1280.20px;top:285.52px;font-size:15.1px;line-height:15.1px;color:#c8c7cc;">Preview</div>
<div class="t" style="left:1241.40px;top:709.55px;font-size:16.6px;line-height:16.6px;color:#1a1a1a;">Hola, Localazy!</div>
<div class="t" style="left:1491.80px;top:1124.18px;font-size:16.8px;line-height:16.8px;color:#a8a8a8;">75%</div>
<div class="t" style="left:1696.60px;top:651.46px;font-size:21.9px;line-height:21.9px;color:#6b6565;">No Selection</div>
<div class="t" style="left:154.20px;top:1161.59px;font-size:15.6px;line-height:15.6px;color:#aaa4a4;">Filter</div>
<div class="t" style="left:880.00px;top:1161.93px;font-size:15.2px;line-height:15.2px;color:#2a2626;">SwiftUIExample</div>
</div>
</body></html>
